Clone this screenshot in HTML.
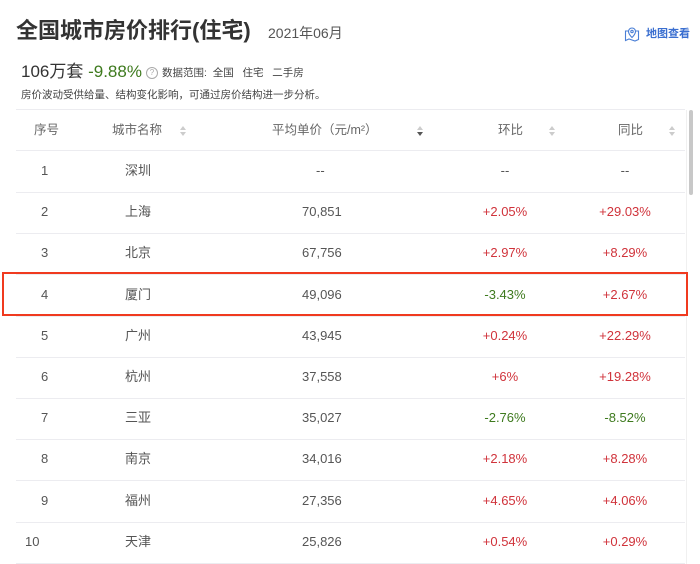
<!DOCTYPE html>
<html><head><meta charset="utf-8"><style>
body{margin:0;width:700px;height:564px;background:#fff;font-family:"Liberation Sans","Noto Sans CJK SC",sans-serif;position:relative;overflow:hidden;color:#333}
.a{position:absolute;white-space:nowrap}
.row{position:absolute;left:16px;width:669px;height:41px;border-bottom:1px solid #ececf0;font-size:13px;color:#555}
.row span{position:absolute;top:12px;line-height:16px;height:16px}
.red{color:#d0333b}.grn{color:#3e7a1e}
.sort{position:absolute;width:6px;height:10px}
.sort:before{content:"";position:absolute;top:0;left:0;border-left:3px solid transparent;border-right:3px solid transparent;border-bottom:4px solid #ccc}
.sort:after{content:"";position:absolute;top:6px;left:0;border-left:3px solid transparent;border-right:3px solid transparent;border-top:4px solid #ccc}
.sort.d:after{border-top-color:#555}
</style></head><body>
<div class="a" style="left:16px;top:16px;font-size:22px;font-weight:bold;color:#333;line-height:30px">全国城市房价排行(住宅)</div>
<div class="a" style="left:268px;top:24px;font-size:14px;color:#555;line-height:18px">2021年06月</div>
<svg class="a" style="left:624px;top:26px" width="16" height="16" viewBox="0 0 16 16" fill="none" stroke="#4a7fd6" stroke-width="1.1"><path d="M4 5H1.5v9.5L5 13l6 2 3.5-1.5V5H12"/><path d="M8 11.5S4.5 8 4.5 5.5a3.5 3.5 0 0 1 7 0C11.5 8 8 11.5 8 11.5z"/><circle cx="8" cy="5.5" r="1.2"/></svg>
<div class="a" style="left:646px;top:27px;font-size:11px;color:#3b6fd0;font-weight:bold;line-height:14px">地图查看</div>
<div class="a" style="left:21px;top:62px;font-size:17px;color:#333;line-height:20px">106万套 <span style="color:#3e7a1e">-9.88%</span></div>
<div class="a" style="left:146px;top:67px;width:10px;height:10px;border:1px solid #aaa;border-radius:50%;font-size:8px;color:#aaa;text-align:center;line-height:10px">?</div>
<div class="a" style="left:162px;top:66px;font-size:10.5px;color:#444;line-height:14px">数据范围:&nbsp; 全国&nbsp;&nbsp; 住宅&nbsp;&nbsp; 二手房</div>
<div class="a" style="left:21px;top:88px;font-size:10.5px;color:#444;line-height:14px">房价波动受供给量、结构变化影响，可通过房价结构进一步分析。</div>
<div class="a" style="left:16px;top:109px;width:669px;border-top:1px solid #ececf0"></div>
<div class="a" style="left:689px;top:110px;width:4px;height:85px;background:#c8c8c8;border-radius:2px"></div>
<div class="a" style="left:686px;top:110px;width:1px;height:454px;background:#f0f0f0"></div>
<div class="row" style="top:110px;height:40px;font-size:12.5px;color:#666">
<span style="left:18px">序号</span><span style="left:96px">城市名称</span><i class="sort" style="left:164px;top:16px"></i>
<span style="left:256px">平均单价（元/m²）</span><i class="sort d" style="left:401px;top:16px"></i>
<span style="left:482px">环比</span><i class="sort" style="left:533px;top:16px"></i>
<span style="left:602px">同比</span><i class="sort" style="left:653px;top:16px"></i></div>
<div id="rows"></div>
<div class="a" style="left:2px;top:272px;width:682px;height:40px;border:2px solid #f03a1f"></div>
<script>
var d=[["1","深圳","--","--","--"],["2","上海","70,851","+2.05%","+29.03%"],["3","北京","67,756","+2.97%","+8.29%"],["4","厦门","49,096","-3.43%","+2.67%"],["5","广州","43,945","+0.24%","+22.29%"],["6","杭州","37,558","+6%","+19.28%"],["7","三亚","35,027","-2.76%","-8.52%"],["8","南京","34,016","+2.18%","+8.28%"],["9","福州","27,356","+4.65%","+4.06%"],["10","天津","25,826","+0.54%","+0.29%"]];
var h="";d.forEach(function(r,i){var t=151+i*41.2;
function c(v){return v[0]=="+"?"red":v[0]=="-"&&v!="--"?"grn":""}
h+='<div class="row" style="top:'+t+'px"><span style="left:'+(r[0].length>1?9:25)+'px">'+r[0]+'</span><span style="left:109px">'+r[1]+'</span><span style="left:'+(r[2]=="--"?300:286)+'px">'+r[2]+'</span><span class="'+c(r[3])+'" style="width:100px;left:439px;text-align:center">'+r[3]+'</span><span class="'+c(r[4])+'" style="width:100px;left:559px;text-align:center">'+r[4]+'</span></div>';});
document.getElementById("rows").innerHTML=h;
</script>
</body></html>
